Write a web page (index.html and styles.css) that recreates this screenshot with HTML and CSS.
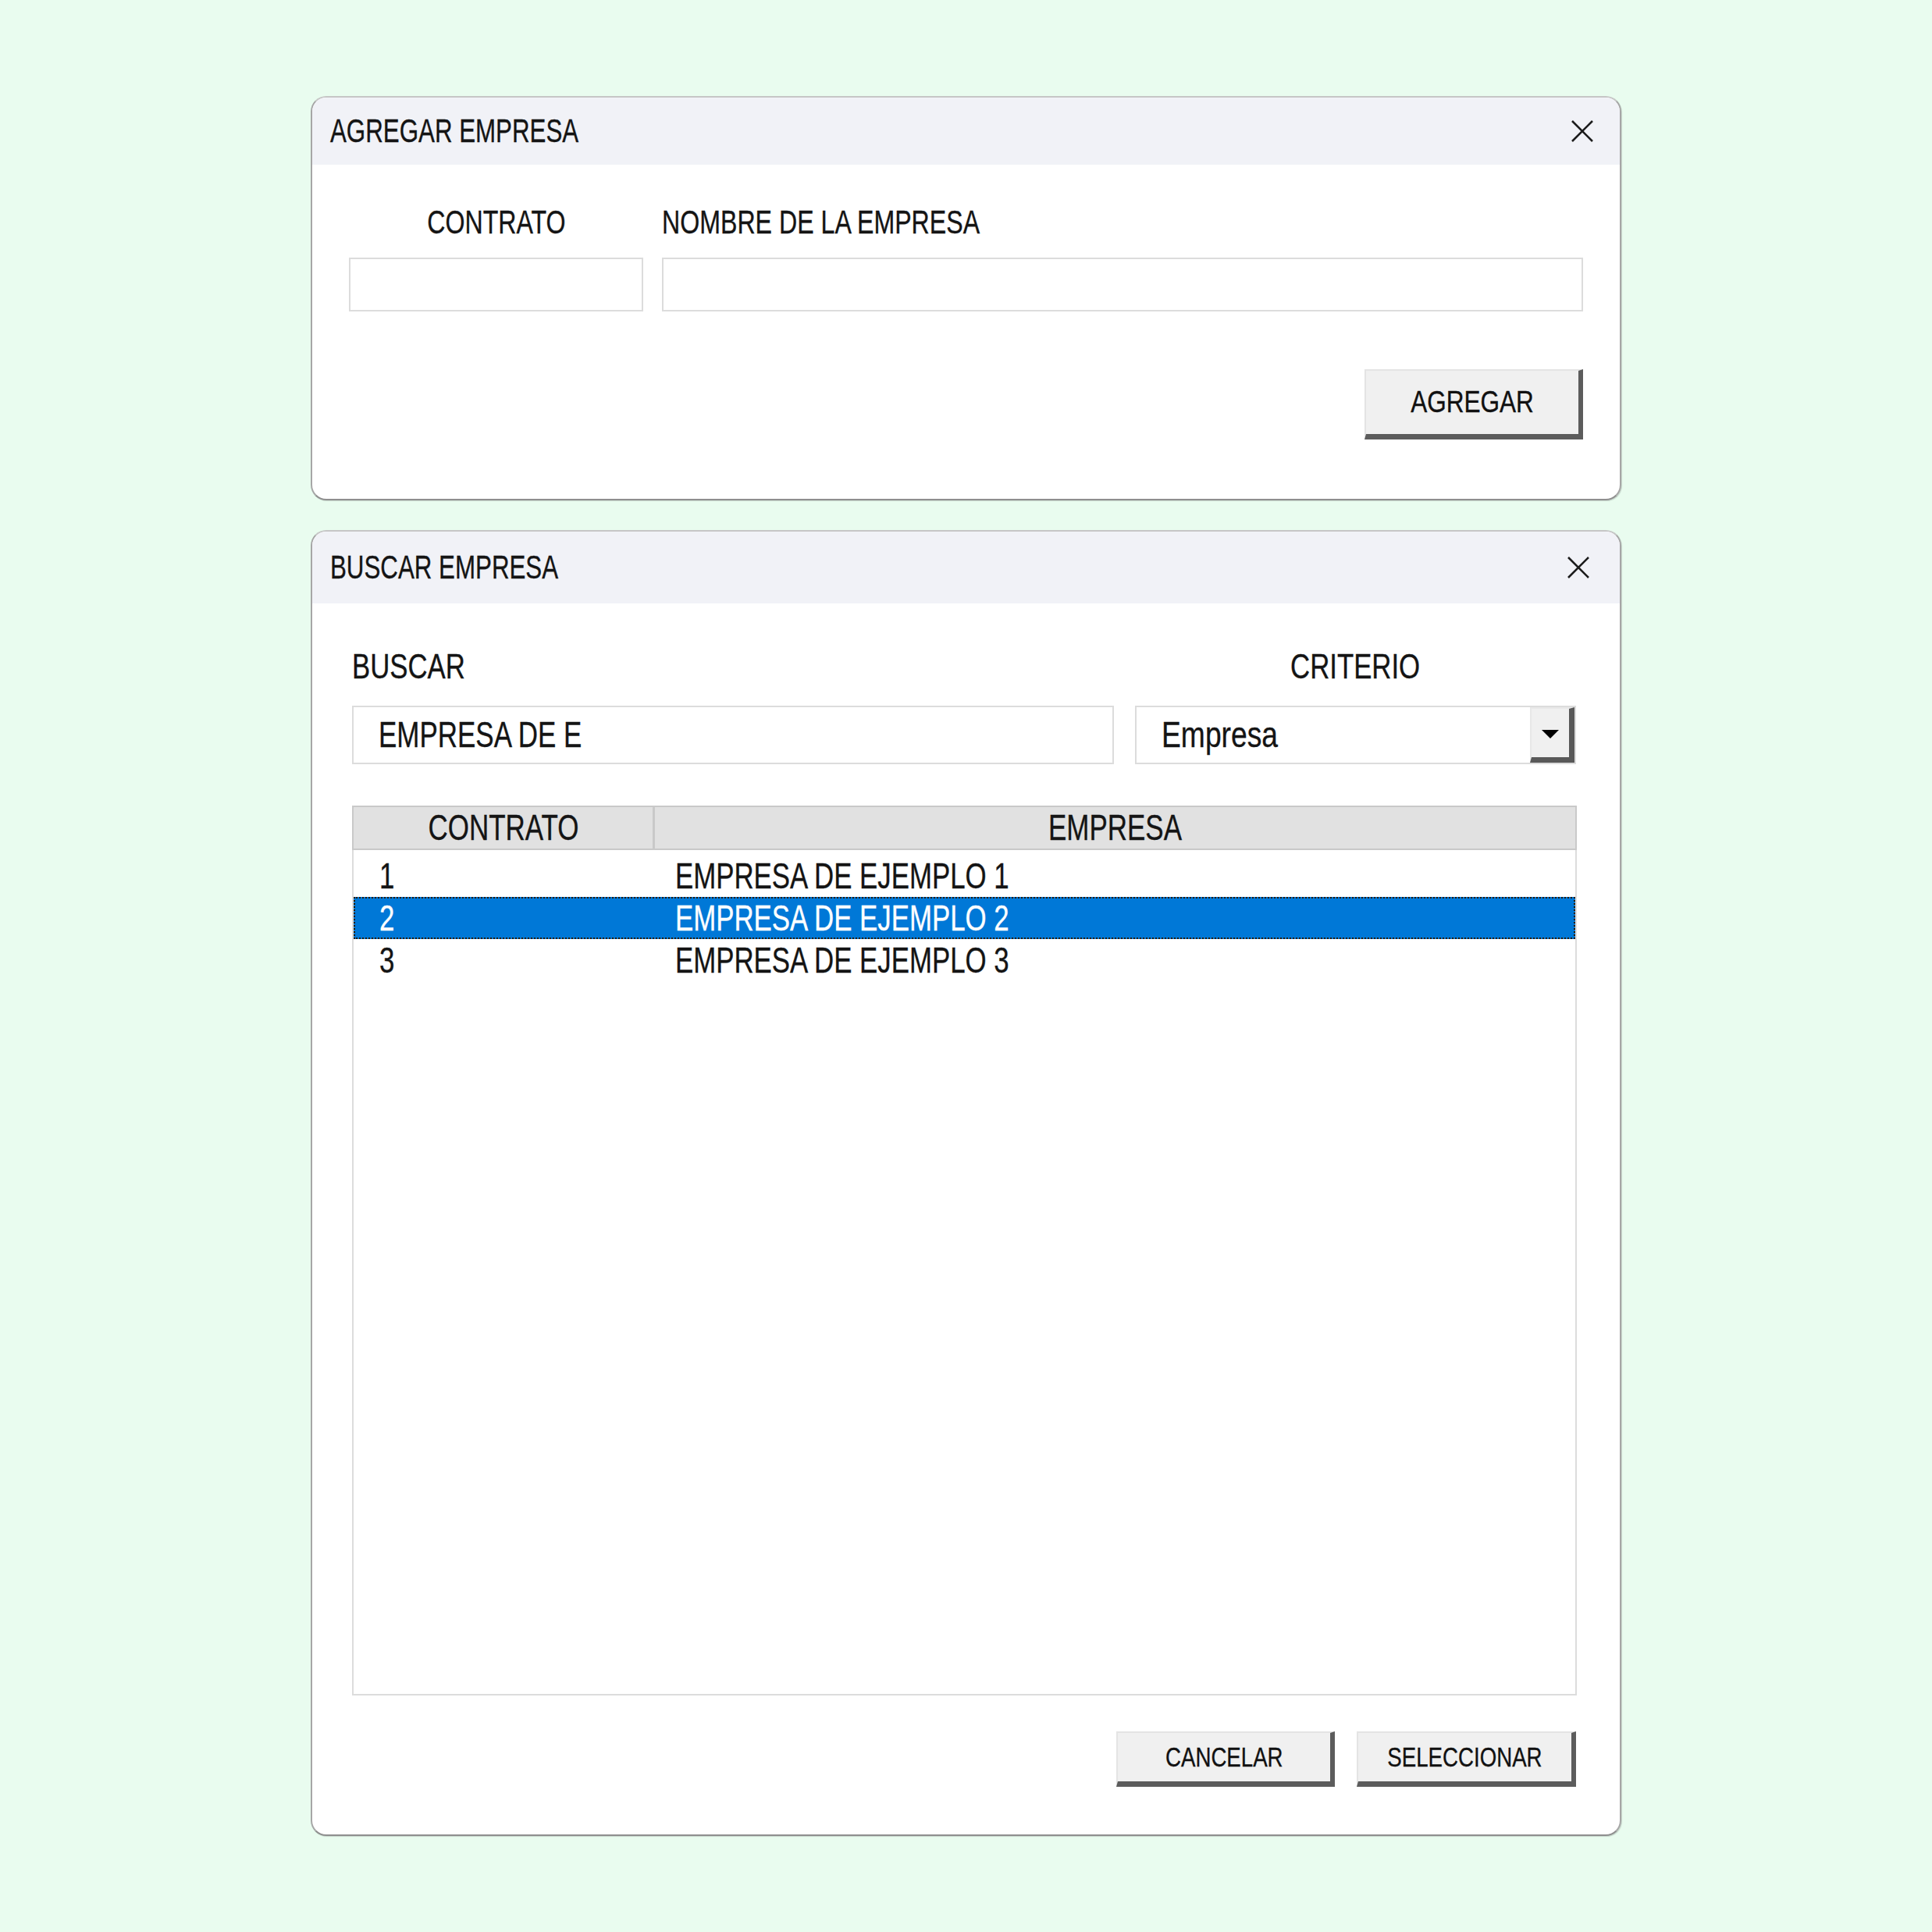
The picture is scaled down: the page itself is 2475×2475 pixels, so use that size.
FILE: index.html
```html
<!DOCTYPE html>
<html lang="es">
<head>
<meta charset="utf-8">
<title>Empresas</title>
<link rel="stylesheet" href="styles.css">
</head>
<body>
<main class="page">
  <section class="dialog dialog-add">
    <header class="titlebar">
      <span class="title"><span class="sq">AGREGAR EMPRESA</span></span>
      <svg class="close" viewBox="0 0 30 30" aria-label="Cerrar"><path d="M2 2L28 28M28 2L2 28"/></svg>
    </header>
    <div class="body add-body">
      <div class="fields">
        <div class="field f-contrato">
          <label class="lbl lbl-center"><span class="sq c">CONTRATO</span></label>
          <div class="input"></div>
        </div>
        <div class="field f-nombre">
          <label class="lbl"><span class="sq">NOMBRE DE LA EMPRESA</span></label>
          <div class="input"></div>
        </div>
      </div>
      <div class="actions">
        <button class="btn btn-lg"><span class="sq c">AGREGAR</span></button>
      </div>
    </div>
  </section>

  <section class="dialog dialog-search">
    <header class="titlebar">
      <span class="title"><span class="sq">BUSCAR EMPRESA</span></span>
      <svg class="close" viewBox="0 0 30 30" aria-label="Cerrar"><path d="M2 2L28 28M28 2L2 28"/></svg>
    </header>
    <div class="body search-body">
      <div class="search-row">
        <div class="field">
          <label class="lbl lbl-big"><span class="sq">BUSCAR</span></label>
          <div class="input input-big"><span class="sq">EMPRESA DE E</span></div>
        </div>
        <div class="field">
          <label class="lbl lbl-big lbl-center"><span class="sq c">CRITERIO</span></label>
          <div class="input input-big select">
            <span class="select-value"><span class="sq">Empresa</span></span>
            <span class="drop"><svg viewBox="0 0 22 11"><path d="M0 0H22L11 11Z"/></svg></span>
          </div>
        </div>
      </div>

      <div class="grid">
        <div class="grid-head">
          <div class="col1 hcell"><span class="sq c">CONTRATO</span></div>
          <div class="col2 hcell"><span class="sq c">EMPRESA</span></div>
        </div>
        <div class="grid-body">
          <div class="row">
            <div class="col1 cell"><span class="sq">1</span></div>
            <div class="col2 cell"><span class="sq">EMPRESA DE EJEMPLO 1</span></div>
          </div>
          <div class="row selected">
            <div class="col1 cell"><span class="sq">2</span></div>
            <div class="col2 cell"><span class="sq">EMPRESA DE EJEMPLO 2</span></div>
          </div>
          <div class="row">
            <div class="col1 cell"><span class="sq">3</span></div>
            <div class="col2 cell"><span class="sq">EMPRESA DE EJEMPLO 3</span></div>
          </div>
        </div>
      </div>

      <div class="actions actions-search">
        <button class="btn btn-sm btn-cancel"><span class="sq c">CANCELAR</span></button>
        <button class="btn btn-sm btn-select"><span class="sq c">SELECCIONAR</span></button>
      </div>
    </div>
  </section>
</main>
</body>
</html>
```

FILE: styles.css
```css
* { box-sizing: border-box; }
html, body { margin: 0; padding: 0; }
body {
  background: #e9fcef;
  font-family: "Liberation Sans", Arial, sans-serif;
  color: #141414;
  width: 2475px;
  min-height: 2475px;
}
.page {
  padding: 123px 0 0 398px;
  display: flex;
  flex-direction: column;
  gap: 38px;
}
.sq {
  display: inline-block;
  white-space: nowrap;
  transform: scaleX(0.76);
  transform-origin: 0 50%;
  -webkit-text-stroke: 0.35px currentColor;
}
.sq.c { transform-origin: 50% 50%; }

/* dialogs */
.dialog {
  width: 1679px;
  background: #ffffff;
  border: 2px solid #a6a6a6;
  border-top-color: #c6c6c6;
  border-bottom-color: #8f8f8f;
  border-radius: 20px;
  overflow: hidden;
  display: flex;
  flex-direction: column;
  box-shadow: 1px 1px 1px rgba(0,0,0,0.15);
}
.dialog-add { height: 518px; }
.dialog-search { height: 1673px; }

.titlebar {
  background: #f1f2f7;
  display: flex;
  align-items: center;
  justify-content: space-between;
  padding: 0 33px 0 23px;
  flex: none;
}
.dialog-add .titlebar { height: 86px; }
.dialog-search .titlebar { height: 92px; padding-right: 38px; }
.title { font-size: 42px; line-height: 50px; }
.title .sq { transform: scaleX(0.745); }
.close {
  width: 30px;
  height: 30px;
  fill: none;
  stroke: #1d1d1d;
  stroke-width: 2.6;
}

/* fields */
.body { display: flex; flex-direction: column; }
.add-body { padding: 49px 47px 0 47px; }
.fields { display: flex; gap: 24px; }
.field { display: flex; flex-direction: column; }
.f-contrato { width: 377px; }
.f-nombre { width: 1180px; }
.lbl {
  font-size: 42px;
  line-height: 50px;
  height: 50px;
  margin-bottom: 20px;
}
.lbl .sq { transform: scaleX(0.765); }
.lbl-center { text-align: center; }
.input {
  height: 69px;
  border: 2px solid #dcdcdc;
  background: #ffffff;
}

.actions { display: flex; justify-content: flex-end; gap: 28px; }
.add-body .actions { margin-top: 74px; }

/* buttons */
.btn {
  padding: 0;
  background: #f0f0f0;
  border-style: solid;
  border-width: 2px 6px 7px 2px;
  border-color: #e4e4e4 #5c5c5c #5c5c5c #e4e4e4;
  font-family: "Liberation Sans", Arial, sans-serif;
  color: #111111;
  display: flex;
  align-items: center;
  justify-content: center;
}
.btn-lg { width: 280px; height: 90px; font-size: 38px; }
.btn-lg .sq { transform: scaleX(0.83); }
.btn-sm { height: 71px; font-size: 35px; }
.btn-sm .sq { transform: scaleX(0.79); }
.btn-cancel { width: 280px; }
.btn-select { width: 281px; }

/* search dialog */
.search-body { padding: 56px 55px 0 51px; }
.search-row {
  display: grid;
  grid-template-columns: 976px 565px;
  gap: 27px;
}
.lbl-big { font-size: 44px; margin-bottom: 25px; }
.lbl-big .sq { transform: scaleX(0.79); }
.input-big {
  height: 75px;
  font-size: 46px;
  line-height: 71px;
  padding-left: 32px;
}
.select { display: flex; padding-left: 0; }
.select-value { flex: 1; padding-left: 32px; }
.select-value .sq { transform: scaleX(0.81); }
.drop {
  width: 57px;
  height: 71px;
  background: #f0f0f0;
  border-style: solid;
  border-width: 2px 7px 7px 2px;
  border-color: #e8e8e8 #595959 #595959 #e8e8e8;
  display: flex;
  align-items: center;
  justify-content: center;
  padding-top: 2px;
}
.drop svg { width: 22px; height: 11px; fill: #000; }

/* grid */
.grid {
  margin-top: 53px;
  height: 1140px;
  border: 2px solid #dcdcdc;
  display: flex;
  flex-direction: column;
}
.grid-head {
  display: flex;
  height: 57px;
  margin: -2px -2px 0 -2px;
  background: #e1e1e1;
  border: 2px solid #c9c9c9;
  flex: none;
}
.hcell {
  font-size: 46px;
  line-height: 53px;
  text-align: center;
}
.col1 { width: 384px; flex: none; }
.col2 { flex: 1; }
.grid-head .col1 { border-right: 3px solid #c9c9c9; width: 386px; }
.grid-body { padding-top: 6px; }
.row {
  display: flex;
  height: 54px;
  align-items: center;
  font-size: 46px;
}
.cell { line-height: 54px; }
.row .col1 { padding-left: 33px; }
.row .col2 { padding-left: 28px; }
.row .sq { transform: scaleX(0.757); }
.row.selected {
  background: #0078d7;
  color: #ffffff;
  outline: 2px dotted #2a1c00;
  outline-offset: -2px;
}

.actions-search { margin-top: 46px; padding-right: 1px; }
```
